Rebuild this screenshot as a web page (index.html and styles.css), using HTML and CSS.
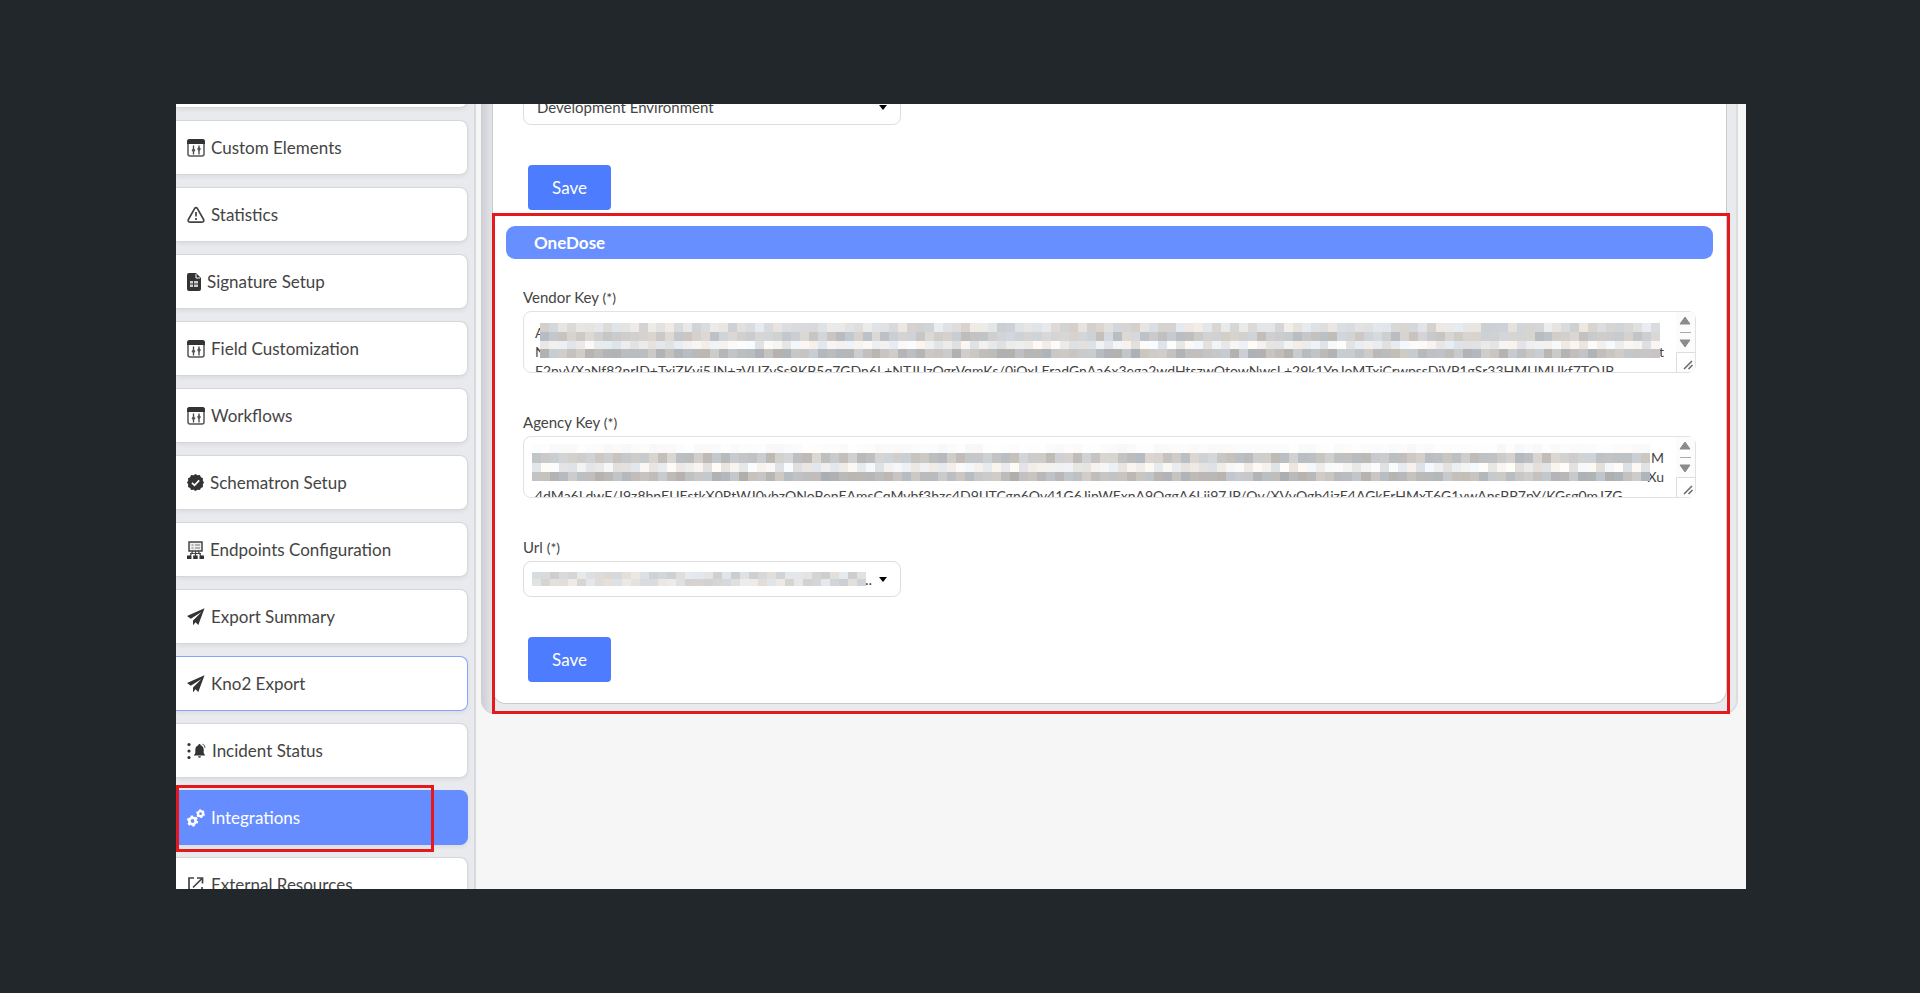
FILE: index.html
```html
<!DOCTYPE html>
<html lang="en">
<head>
<meta charset="UTF-8">
<meta name="viewport" content="width=device-width, initial-scale=1.0">
<title>Integrations</title>
<link rel="stylesheet" href="styles.css">
</head>
<body>
<svg class="sprite" aria-hidden="true">
    <symbol id="sliders" viewBox="0 0 18 18">
        <rect x="1" y="1" width="16" height="16" rx="2" fill="#fff" stroke="#555" stroke-width="1.5"/>
        <path d="M0 5V2.500Q0 0 2.500 0h13Q18 0 18 2.500V5z" fill="#333"/>
        <path d="M6.500 6.500v9M12 6.500v9" stroke="#444" stroke-width="1.300"/>
        <path d="M6.500 9l2 2.300-2 2.300-2-2.300zM12 7.800l2 2.300-2 2.300-2-2.300z" fill="#555"/>
    </symbol>
    <symbol id="warning" viewBox="0 0 18 18">
        <path d="M7.600 2.600Q9 .6 10.400 2.600L16.600 13.500Q17.500 16 15 16.200H3Q.5 16 1.400 13.500z" fill="none" stroke="#444" stroke-width="1.700" stroke-linejoin="round"/>
        <path d="M9 6v4.500M9 12v2" stroke="#444" stroke-width="1.700"/>
    </symbol>
    <symbol id="document" viewBox="0 0 14 18">
        <path d="M2 0h7l5 5v11q0 2-2 2H2q-2 0-2-2V2q0-2 2-2z" fill="#333"/>
        <path d="M9 1v4h4" fill="none" stroke="#fff"/>
        <path d="M3 8h3v2.500H3zM7 8h4v2.500H7zM3 11.500h3V14H3zM7 11.500h4V14H7z" fill="#ccc"/>
    </symbol>
    <symbol id="verified" viewBox="0 0 17 17">
        <path d="M8.500 0l2 1.300 2.400-.2 1 2.100 2.100 1-.2 2.300 1.200 2-1.200 2 .2 2.400-2.100 1-1 2.100-2.400-.2-2 1.200-2-1.200-2.400.2-1-2.100-2.100-1 .2-2.400L0 8.500l1.200-2L1 4.200l2.100-1 1-2.100 2.400.2z" fill="#333"/>
        <path d="M5 8.800l2.500 2.500 4.700-5" fill="none" stroke="#fff" stroke-width="1.700"/>
    </symbol>
    <symbol id="endpoints" viewBox="0 0 17 18">
        <rect x="2" y="1" width="13" height="9" fill="#eee" stroke="#444" stroke-width="1.500"/>
        <path d="M4.500 4h2M8 4h5M4.500 7h2M8 7h5" stroke="#777" stroke-width="1.200"/>
        <path d="M6 10L3 15M11 10l3 5M8.500 10v5M3 12.500h11" stroke="#444" stroke-width="1.200" fill="none"/>
        <path d="M0 14.500h4.500V18H0zM6.200 14.500h4.500V18H6.200zM12.500 14.500H17V18h-4.500z" fill="#333"/>
    </symbol>
    <symbol id="plane" viewBox="0 0 18 18">
        <path d="M17.500.3L0 8l3.800 2.700L14.500 4 6 12.500v4.700l2.500-3L11.300 17z" fill="#333"/>
    </symbol>
    <symbol id="alert" viewBox="0 0 19 18">
        <circle cx="2" cy="2.500" r="1.600" fill="#333"/>
        <circle cx="2" cy="9" r="1.600" fill="#333"/>
        <circle cx="2" cy="15.500" r="1.600" fill="#333"/>
        <path d="M12.500 2q1.100 0 1.200 1.200 3 1 3 4.500V11l1.500 2.500H6.800L8.300 11V7.700q0-3.500 3-4.500Q11.400 2 12.500 2zM11 14.200h3q-.4 1.500-1.500 1.500T11 14.200z" fill="#333"/>
        <path d="M15.500 2q2.300 1 2.600 4" fill="none" stroke="#777" stroke-width="1.200"/>
    </symbol>
    <symbol id="gears" viewBox="0 0 18 18">
        <circle cx="5.500" cy="12" r="3.200" fill="none" stroke="#fff" stroke-width="2.600"/>
        <circle cx="5.500" cy="12" r="4.700" fill="none" stroke="#fff" stroke-width="1.800" stroke-dasharray="2.460 2.460"/>
        <circle cx="13.500" cy="4.700" r="2.500" fill="none" stroke="#fff" stroke-width="2.200"/>
        <circle cx="13.500" cy="4.700" r="3.700" fill="none" stroke="#fff" stroke-width="1.400" stroke-dasharray="1.940 1.940"/>
    </symbol>
    <symbol id="external" viewBox="0 0 18 18">
        <path d="M7 2H2v14h13v-5M10 2h5.500v5.500M15.500 2L6 11.500" fill="none" stroke="#444" stroke-width="1.700"/>
    </symbol>
    <symbol id="scroll" viewBox="0 0 19 60">
        <path d="M0 0h19v60H0z" fill="#fcfcfc"/>
        <path d="M4 12l5-7 5 7zM4 28h10l-5 7z" fill="#8b8b8b" stroke="#8b8b8b" stroke-linejoin="round"/>
        <path d="M4 20.500h11" stroke="#aaa"/>
        <path d="M.5 60V40.500H19" fill="#fff" stroke="#ddd"/>
        <path d="M8 57l8-8M12.500 57l4-4" stroke="#666" stroke-width="1.500"/>
    </symbol>
</svg>

<div class="app">
    <nav class="sidebar">
        <ul class="menu">
            <li class="item"></li>
            <li><a class="item" href="#"><svg class="icon" width="18" height="18"><use href="#sliders"/></svg>Custom Elements</a></li>
            <li><a class="item" href="#"><svg class="icon" width="18" height="18"><use href="#warning"/></svg>Statistics</a></li>
            <li><a class="item" href="#"><svg class="icon" width="14" height="18"><use href="#document"/></svg>Signature Setup</a></li>
            <li><a class="item" href="#"><svg class="icon" width="18" height="18"><use href="#sliders"/></svg>Field Customization</a></li>
            <li><a class="item" href="#"><svg class="icon" width="18" height="18"><use href="#sliders"/></svg>Workflows</a></li>
            <li><a class="item" href="#"><svg class="icon" width="17" height="17"><use href="#verified"/></svg>Schematron Setup</a></li>
            <li><a class="item" href="#"><svg class="icon" width="17" height="18"><use href="#endpoints"/></svg>Endpoints Configuration</a></li>
            <li><a class="item" href="#"><svg class="icon" width="18" height="18"><use href="#plane"/></svg>Export Summary</a></li>
            <li><a class="item focused" href="#"><svg class="icon" width="18" height="18"><use href="#plane"/></svg>Kno2 Export</a></li>
            <li><a class="item" href="#"><svg class="icon" width="19" height="18"><use href="#alert"/></svg>Incident Status</a></li>
            <li class="marked"><a class="item active" href="#"><svg class="icon" width="18" height="18"><use href="#gears"/></svg>Integrations</a></li>
            <li><a class="item" href="#"><svg class="icon" width="18" height="18"><use href="#external"/></svg>External Resources</a></li>
        </ul>
    </nav>

    <main class="main">
        <div class="panel">
            <div class="card">
                <form class="form">
                    <div class="select-box">
                        <select class="select" aria-label="Environment">
                            <option>Development Environment</option>
                        </select>
                    </div>
                    <button class="save" type="button">Save</button>
                </form>

                <section class="onedose">
                    <h2 class="title">OneDose</h2>
                    <form class="form">
                        <div class="field">
                            <label for="vendor">Vendor Key <small>(*)</small></label>
                            <div class="key-box">
                                <textarea class="key" id="vendor">A
N t
F2nvVXaNf82nrID+TxjZKvj5JN+zVUZySs9KB5q7GDn6L+NTJUzQgrVqmKs/0iQxLEradGnAa6x3ega2wdHtszwQtowNwcL+29k1YnJoMTxjCrwpssDiVP1gSr33HMUMUkf7TOJP</textarea>
                                <canvas class="mosaic mosaic-vendor" data-cols="125" data-rows="222,203,238,192"></canvas>
                                <svg class="scroll" aria-hidden="true"><use href="#scroll"/></svg>
                            </div>
                        </div>
                        <div class="field">
                            <label for="agency">Agency Key <small>(*)</small></label>
                            <div class="key-box">
                                <textarea class="key" id="agency">&nbsp; M
&nbsp; Xu
4dMa6LdwF/J9z8bnEUEstkX0RtWJ0vbzQNoBenEAmsCqMvbf3hzc4D9IJTCgn6Qv41G6JjnWExnA9QggA6Ljj97JP/Ov/XVvQgb4jzE4AGkErHMxT6G1ywAnsBP7pY/KGsg0mJZG</textarea>
                                <canvas class="mosaic mosaic-agency" data-cols="124" data-rows="251,200,238,190"></canvas>
                                <svg class="scroll" aria-hidden="true"><use href="#scroll"/></svg>
                            </div>
                        </div>
                        <div class="field">
                            <label for="url">Url <small>(*)</small></label>
                            <div class="select-box">
                                <select class="select select-url" id="url">
                                    <option>..</option>
                                </select>
                                <canvas class="mosaic mosaic-url" data-cols="37" data-rows="220,222"></canvas>
                            </div>
                        </div>
                        <button class="save" type="button">Save</button>
                    </form>
                </section>
            </div>
        </div>
    </main>
</div>

<script>
    // fill the redaction strips: one grey level per row, varied per cell
    let seed = 7;
    function random() {
        seed = (seed * 16807) % 2147483647;
        return seed / 2147483647;
    }

    document.querySelectorAll('.mosaic').forEach(function(canvas) {
        const rows = canvas.dataset.rows.split(',').map(Number);
        canvas.width = Number(canvas.dataset.cols);
        canvas.height = rows.length;
        const ctx = canvas.getContext('2d');
        rows.forEach(function(level, y) {
            const spread = level > 245 ? 3 : 15;
            for (let x = 0; x < canvas.width; x++) {
                const grey = level + (random() - 0.5) * 2 * spread;
                const tint = (random() - 0.5) * spread * 0.8;
                ctx.fillStyle = `rgb(${Math.round(grey + tint)}, ${Math.round(grey)}, ${Math.round(grey - tint)})`;
                ctx.fillRect(x, y, 1, 1);
            }
        });
    });
</script>
</body>
</html>
```
FILE: styles.css
```css
* {
    box-sizing: border-box;
}

body {
    margin: 0;
    height: 100vh;
    padding: 104px 174px 104px 176px;
    background: #22272b;
    color: #444;
    font-family: Lato, sans-serif;
    font-size: 15px;
}

.sprite {
    display: none;
}

.app {
    display: flex;
    height: 100%;
    background: #f6f6f6;
    overflow: hidden;
}

/* Sidebar */
.sidebar {
    width: 300px;
    flex-shrink: 0;
    padding-right: 6px;
    background: #e9eaee;
    border-right: 2px solid #d8d9dd;
}

.menu {
    list-style: none;
    margin: -51px 0 0;
    padding: 0;
    display: flex;
    flex-direction: column;
    gap: 12px;
}

.item {
    display: flex;
    align-items: center;
    gap: 6px;
    height: 55px;
    padding-left: 11px;
    background: #fff;
    border: 1px solid #d6d7da;
    border-left: 0;
    border-radius: 0 8px 8px 0;
    box-shadow: 0 2px 4px rgba(0, 0, 0, 0.06);
    color: #444;
    font-size: 17px;
    text-decoration: none;
}

.icon {
    flex-shrink: 0;
}

.focused {
    border-color: #86a4ff;
}

.active {
    background: #668dff;
    border-color: #668dff;
    color: #fff;
}

.marked {
    position: relative;
}

.marked::after {
    content: "";
    position: absolute;
    inset: -5px 34px -7px 0;
    border: 3px solid #e5191c;
}

/* Main area */
.main {
    flex: 1;
    min-width: 0;
    padding: 0 8px 0 5px;
}

.panel {
    padding: 0 9px 9px 11px;
    background: linear-gradient(90deg, #cdced3, #e9eaee 14px);
    border-right: 2px solid #dcdde1;
    border-bottom: 1px solid #d0d1d4;
    border-radius: 0 0 14px 14px;
}

.card {
    padding: 0 13px 21px;
    background: #fff;
    border: 1px solid #c9cacd;
    border-top: 0;
    border-radius: 0 0 14px 14px;
}

.form {
    padding: 0 17px;
}

.select-box {
    position: relative;
    width: 378px;
}

.select-box::after {
    content: "";
    position: absolute;
    top: 16px;
    right: 14px;
    border: 4px solid transparent;
    border-top: 5px solid #000;
    border-bottom: 0;
}

.card > .form .select-box {
    margin-top: -15px;
}

.select {
    appearance: none;
    display: block;
    width: 100%;
    height: 36px;
    padding: 0 28px 0 13px;
    background: #fff;
    border: 1px solid #ddd;
    border-radius: 8px;
    color: #444;
    font: 15px Lato, sans-serif;
}

.select-url {
    text-align-last: right;
}

.save {
    display: block;
    width: 83px;
    height: 45px;
    margin: 40px 0 0 5px;
    background: #4d7cff;
    border: 0;
    border-radius: 4px;
    color: #fff;
    font: 17px Lato, sans-serif;
}

.onedose {
    position: relative;
    margin-top: 16px;
}

.onedose::after {
    content: "";
    position: absolute;
    inset: -13px -17px -32px -14px;
    border: 3px solid #e5191c;
    pointer-events: none;
}

.title {
    height: 33px;
    margin: 0 0 29px;
    padding-left: 28px;
    background: #688fff;
    border-radius: 9px;
    color: #fff;
    font-size: 17px;
    line-height: 33px;
}

.field {
    margin-bottom: 40px;
}

.field label {
    display: block;
    margin-bottom: 4px;
    line-height: 18px;
}

.field small {
    font-size: 14px;
}

.key-box {
    position: relative;
}

.key {
    display: block;
    width: 100%;
    height: 62px;
    padding: 11px 31px 0 11px;
    border: 1px solid #e2e2e2;
    border-radius: 8px;
    color: #444;
    font: 14px/19px Lato, sans-serif;
    text-align-last: justify;
    overflow: hidden;
    resize: none;
}

.scroll {
    position: absolute;
    top: 1px;
    right: 1px;
    width: 19px;
    height: 60px;
}

.mosaic {
    position: absolute;
    image-rendering: pixelated;
}

.mosaic-vendor {
    top: 12px;
    left: 17px;
    width: calc(100% - 53px);
    height: 35px;
}

.mosaic-agency {
    top: 8px;
    left: 9px;
    width: calc(100% - 55px);
    height: 37px;
}

.mosaic-url {
    top: 11px;
    left: 9px;
    width: 334px;
    height: 14px;
}

.field:has(.select-box) {
    margin-bottom: 0;
}
```
